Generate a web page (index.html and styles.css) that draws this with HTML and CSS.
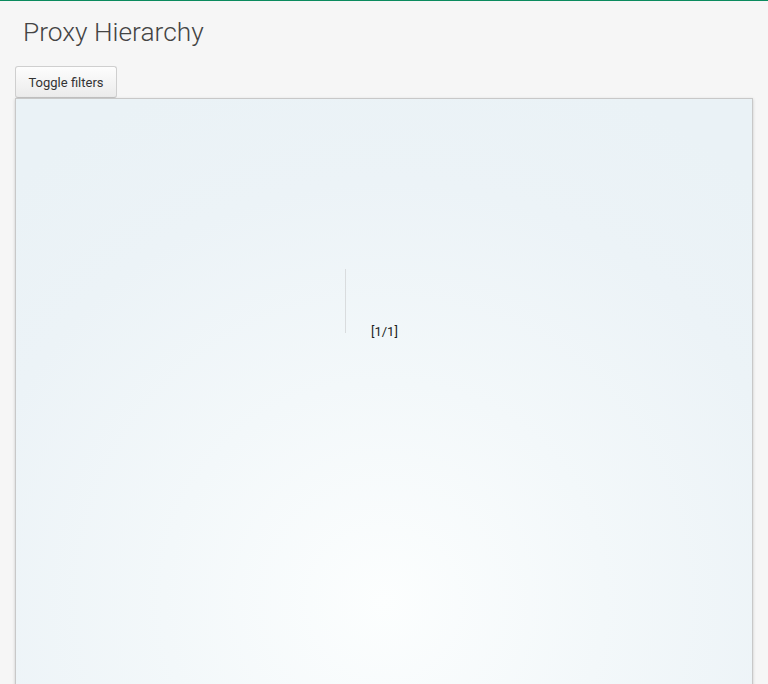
FILE: index.html
```html
<!DOCTYPE html>
<html>
<head>
<meta charset="utf-8">
<link rel="stylesheet" href="styles.css">
</head>
<body>
<h1 class="title">Proxy Hierarchy</h1>
<button class="toggle">Toggle filters</button>
<div class="canvas">
  <div class="link"></div>
  <div class="node">[1/1]</div>
</div>
</body>
</html>
```
FILE: styles.css
```css
html, body {
  margin: 0;
  padding: 0;
}
body {
  background: #f6f6f6;
  border-top: 1px solid #0b8b5e;
  font-family: Roboto, "Liberation Sans", sans-serif;
  overflow: hidden;
  height: 683px;
}
.title {
  margin: 16px 0 0 23px;
  font-size: 26.3px;
  font-weight: 300;
  line-height: 30px;
  color: #444;
}
.toggle {
  display: block;
  margin: 19px 0 0 15px;
  width: 102px;
  height: 32px;
  padding: 0;
  font-family: Roboto, "Liberation Sans", sans-serif;
  font-size: 13px;
  color: #333;
  background: linear-gradient(#fdfdfd, #ebebeb);
  border: 1px solid #cfcfcf;
  border-bottom-color: #c4c4c4;
  border-radius: 3px;
}
.canvas {
  position: relative;
  margin: 0 15px 0 15px;
  height: 590px;
  border: 1px solid #c8c8c8;
  box-shadow: 0 1px 3px rgba(0,0,0,0.18);
  background: radial-gradient(circle at 50% 503px, #fcfefe 0px, #f3f8fa 220px, #ecf3f7 420px, #eaf2f6 560px);
}
.link {
  position: absolute;
  left: 329px;
  top: 170px;
  width: 1px;
  height: 64px;
  background: #d9dcde;
}
.node {
  position: absolute;
  left: 355px;
  top: 225px;
  font-size: 13px;
  color: #222;
  line-height: 16px;
}
```
